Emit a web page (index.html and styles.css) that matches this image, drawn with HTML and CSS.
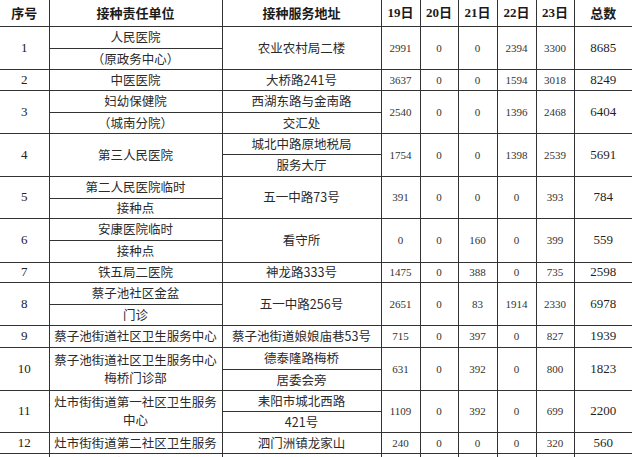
FILE: index.html
```html
<!DOCTYPE html>
<html lang="zh-CN">
<head>
<meta charset="utf-8">
<title>接种点统计</title>
<link rel="stylesheet" href="styles.css">
</head>
<body>
<table class="sheet">
  <colgroup>
    <col class="c-seq"><col class="c-unit"><col class="c-addr">
    <col class="c-d"><col class="c-d2"><col class="c-d"><col class="c-d"><col class="c-d2"><col class="c-tot">
  </colgroup>
  <thead>
    <tr class="hr">
      <th>序号</th><th>接种责任单位</th><th>接种服务地址</th>
      <th class="dh">19日</th><th class="dh">20日</th><th class="dh">21日</th><th class="dh">22日</th><th class="dh">23日</th><th>总数</th>
    </tr>
  </thead>
  <tbody>
    <tr class="h22">
      <td rowspan="2" class="seq">1</td><td class="unit">人民医院</td><td rowspan="2" class="addr">农业农村局二楼</td>
      <td rowspan="2" class="n">2991</td><td rowspan="2" class="n">0</td><td rowspan="2" class="n">0</td><td rowspan="2" class="n">2394</td><td rowspan="2" class="n">3300</td><td rowspan="2" class="tot">8685</td>
    </tr>
    <tr class="h21"><td class="unit">（原政务中心）</td></tr>

    <tr class="h21">
      <td class="seq">2</td><td class="unit">中医医院</td><td class="addr">大桥路241号</td>
      <td class="n">3637</td><td class="n">0</td><td class="n">0</td><td class="n">1594</td><td class="n">3018</td><td class="tot">8249</td>
    </tr>

    <tr class="h22">
      <td rowspan="2" class="seq">3</td><td class="unit">妇幼保健院</td><td class="addr">西湖东路与金南路</td>
      <td rowspan="2" class="n">2540</td><td rowspan="2" class="n">0</td><td rowspan="2" class="n">0</td><td rowspan="2" class="n">1396</td><td rowspan="2" class="n">2468</td><td rowspan="2" class="tot">6404</td>
    </tr>
    <tr class="h21"><td class="unit">（城南分院）</td><td class="addr">交汇处</td></tr>

    <tr class="h21">
      <td rowspan="2" class="seq">4</td><td rowspan="2" class="unit">第三人民医院</td><td class="addr">城北中路原地税局</td>
      <td rowspan="2" class="n">1754</td><td rowspan="2" class="n">0</td><td rowspan="2" class="n">0</td><td rowspan="2" class="n">1398</td><td rowspan="2" class="n">2539</td><td rowspan="2" class="tot">5691</td>
    </tr>
    <tr class="h22"><td class="addr">服务大厅</td></tr>

    <tr class="h22">
      <td rowspan="2" class="seq">5</td><td class="unit">第二人民医院临时</td><td rowspan="2" class="addr">五一中路73号</td>
      <td rowspan="2" class="n">391</td><td rowspan="2" class="n">0</td><td rowspan="2" class="n">0</td><td rowspan="2" class="n">0</td><td rowspan="2" class="n">393</td><td rowspan="2" class="tot">784</td>
    </tr>
    <tr class="h20"><td class="unit">接种点</td></tr>

    <tr class="h22">
      <td rowspan="2" class="seq">6</td><td class="unit">安康医院临时</td><td rowspan="2" class="addr">看守所</td>
      <td rowspan="2" class="n">0</td><td rowspan="2" class="n">0</td><td rowspan="2" class="n">160</td><td rowspan="2" class="n">0</td><td rowspan="2" class="n">399</td><td rowspan="2" class="tot">559</td>
    </tr>
    <tr class="h22"><td class="unit">接种点</td></tr>

    <tr class="h20">
      <td class="seq">7</td><td class="unit">铁五局二医院</td><td class="addr">神龙路333号</td>
      <td class="n">1475</td><td class="n">0</td><td class="n">388</td><td class="n">0</td><td class="n">735</td><td class="tot">2598</td>
    </tr>

    <tr class="h22">
      <td rowspan="2" class="seq">8</td><td class="unit">蔡子池社区金盆</td><td rowspan="2" class="addr">五一中路256号</td>
      <td rowspan="2" class="n">2651</td><td rowspan="2" class="n">0</td><td rowspan="2" class="n">83</td><td rowspan="2" class="n">1914</td><td rowspan="2" class="n">2330</td><td rowspan="2" class="tot">6978</td>
    </tr>
    <tr class="h21"><td class="unit">门诊</td></tr>

    <tr class="h22">
      <td class="seq">9</td><td class="unit">蔡子池街道社区卫生服务中心</td><td class="addr">蔡子池街道娘娘庙巷53号</td>
      <td class="n">715</td><td class="n">0</td><td class="n">397</td><td class="n">0</td><td class="n">827</td><td class="tot">1939</td>
    </tr>

    <tr class="h22">
      <td rowspan="2" class="seq">10</td><td rowspan="2" class="unit wrap">蔡子池街道社区卫生服务中心<br>梅桥门诊部</td><td class="addr">德泰隆路梅桥</td>
      <td rowspan="2" class="n">631</td><td rowspan="2" class="n">0</td><td rowspan="2" class="n">392</td><td rowspan="2" class="n">0</td><td rowspan="2" class="n">800</td><td rowspan="2" class="tot">1823</td>
    </tr>
    <tr class="h21"><td class="addr">居委会旁</td></tr>

    <tr class="h21">
      <td rowspan="2" class="seq">11</td><td rowspan="2" class="unit wrap">灶市街街道第一社区卫生服务<br>中心</td><td class="addr">耒阳市城北西路</td>
      <td rowspan="2" class="n">1109</td><td rowspan="2" class="n">0</td><td rowspan="2" class="n">392</td><td rowspan="2" class="n">0</td><td rowspan="2" class="n">699</td><td rowspan="2" class="tot">2200</td>
    </tr>
    <tr class="h21"><td class="addr">421号</td></tr>

    <tr class="h21">
      <td class="seq">12</td><td class="unit">灶市街街道第二社区卫生服务</td><td class="addr">泗门洲镇龙家山</td>
      <td class="n">240</td><td class="n">0</td><td class="n">0</td><td class="n">0</td><td class="n">320</td><td class="tot">560</td>
    </tr>

    <tr class="h40 cut">
      <td class="seq">13</td><td class="unit top">中心（泗门洲镇卫生院）</td><td class="addr"></td>
      <td class="n"></td><td class="n"></td><td class="n"></td><td class="n"></td><td class="n"></td><td class="tot"></td>
    </tr>
  </tbody>
</table>
</body>
</html>
```

FILE: styles.css
```css
html, body {
  margin: 0;
  padding: 0;
  background: #ffffff;
  overflow: hidden;
}

.sheet {
  border-collapse: collapse;
  border-style: hidden;
  table-layout: fixed;
  width: 632px;
  font-family: "Noto Sans CJK SC", sans-serif;
  color: #222222;
}

.c-seq { width: 49px; }
.c-unit { width: 173px; }
.c-addr { width: 159px; }
.c-d { width: 39px; }
.c-d2 { width: 38px; }
.c-tot { width: 58px; }

.sheet th,
.sheet td {
  border: 1px solid #333333;
  padding: 0;
  text-align: center;
  vertical-align: middle;
  white-space: nowrap;
  overflow: hidden;
}

.hr { height: 26px; }
.h20 { height: 20px; }
.h21 { height: 21px; }
.h22 { height: 22px; }
.h40 { height: 40px; }

.sheet th {
  font-size: 13px;
  font-weight: 700;
  line-height: 18px;
  color: #1a1a1a;
}

.sheet th.dh {
  font-family: "Liberation Serif", "Noto Sans CJK SC", serif;
  font-size: 13px;
}

.seq {
  font-family: "Liberation Serif", serif;
  font-size: 13px;
  line-height: 16px;
}

.unit,
.addr {
  font-size: 12.5px;
  line-height: 18px;
  color: #2a2a2a;
}

.n {
  font-family: "Liberation Serif", serif;
  font-size: 11px;
  line-height: 14px;
  color: #333333;
}

.tot {
  font-family: "Liberation Serif", serif;
  font-size: 13px;
  line-height: 16px;
  color: #1f1f1f;
}

.sheet td.top {
  vertical-align: top;
}
```
